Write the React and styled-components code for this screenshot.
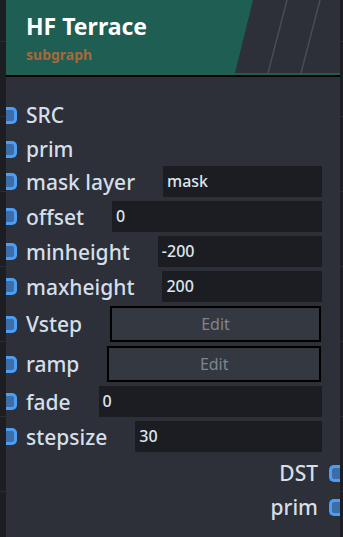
import React from "react";
import styled, { createGlobalStyle } from "styled-components";

const GlobalStyle = createGlobalStyle`
  html, body {
    margin: 0;
    padding: 0;
    height: 100%;
  }
  body {
    background-color: #1c1e24;
    background-image: linear-gradient(#2a2d34 1px, transparent 1px);
    background-size: 100% 75px;
    background-position: 0 41px;
    font-family: "Noto Sans", "Open Sans", sans-serif;
    overflow: hidden;
  }
`;

const inputs = [
  { label: "mask layer", value: "mask" },
  { label: "offset", value: "0" },
  { label: "minheight", value: "-200" },
  { label: "maxheight", value: "200" },
];

const tail = [
  { label: "fade", value: "0" },
  { label: "stepsize", value: "30" },
];

const App = () => {
  return (
    <>
      <GlobalStyle />
      <Node>
        <Header>
          <Title>HF Terrace</Title>
          <Subtitle>subgraph</Subtitle>
          <Deco viewBox="0 0 105 73" preserveAspectRatio="none">
            <polygon points="18,0 105,0 105,73 0,73" fill="#2d3038" />
            <line x1="52" y1="0" x2="33" y2="73" stroke="#494c53" strokeWidth="1.5" />
            <line x1="85" y1="0" x2="66" y2="73" stroke="#494c53" strokeWidth="1.5" />
          </Deco>
        </Header>
        <Body>
          <SocketRow>
            <Socket />
            <Label>SRC</Label>
          </SocketRow>
          <SocketRow>
            <Socket />
            <Label>prim</Label>
          </SocketRow>
          {inputs.map((item) => (
            <FieldRow key={item.label}>
              <Socket />
              <Label>{item.label}</Label>
              <Field>{item.value}</Field>
            </FieldRow>
          ))}
          <ButtonRow>
            <Socket />
            <Label>Vstep</Label>
            <EditButton>Edit</EditButton>
          </ButtonRow>
          <ButtonRow>
            <Socket />
            <Label>ramp</Label>
            <EditButton>Edit</EditButton>
          </ButtonRow>
          {tail.map((item) => (
            <FieldRow key={item.label}>
              <Socket />
              <Label>{item.label}</Label>
              <Field>{item.value}</Field>
            </FieldRow>
          ))}
          <OutRow>
            <Label>DST</Label>
            <Socket right />
          </OutRow>
          <OutRow>
            <Label>prim</Label>
            <Socket right />
          </OutRow>
        </Body>
      </Node>
    </>
  );
};

const Node = styled.div`
  margin-left: 6px;
  width: 334px;
  height: 537px;
  background: #2d3038;
  display: flex;
  flex-direction: column;
`;

const Header = styled.div`
  position: relative;
  height: 75px;
  background: #1f5e52;
  border-bottom: 2px solid #000;
  padding-left: 20px;
  box-sizing: content-box;
  display: flex;
  flex-direction: column;
`;

const Title = styled.div`
  margin-top: 11px;
  font-size: 23px;
  font-weight: 700;
  line-height: 30px;
  color: #ffffff;
  position: relative;
  z-index: 1;
`;

const Subtitle = styled.div`
  margin-top: 5px;
  font-size: 14px;
  font-weight: 700;
  line-height: 18px;
  color: #a8683c;
`;

const Deco = styled.svg`
  position: absolute;
  right: 0;
  top: 0;
  width: 105px;
  height: 73px;
`;

const Body = styled.div`
  padding-top: 21px;
  display: flex;
  flex-direction: column;
`;

const Row = styled.div`
  display: flex;
  align-items: center;
  padding-right: 18px;
`;

const SocketRow = styled(Row)`
  height: 34px;
`;

const FieldRow = styled(Row)`
  height: 31px;
  margin-bottom: 4px;
`;

const ButtonRow = styled(Row)`
  height: 36px;
  margin-bottom: 4px;
  padding-right: 19px;
`;

const OutRow = styled(Row)`
  height: 34px;
  justify-content: flex-end;
  padding-right: 0;
  &:first-of-type {
    margin-top: 2px;
  }
`;

const Socket = styled.div`
  width: 11px;
  height: 17px;
  box-sizing: border-box;
  flex-shrink: 0;
  background: #3c6da6;
  border: 3px solid #4c9ef5;
  ${(p) =>
    p.right
      ? `border-right: none; border-radius: 5px 0 0 5px; margin-left: 11px;`
      : `border-left: none; border-radius: 0 5px 5px 0; margin-right: 9px;`}
`;

const Label = styled.div`
  font-size: 21px;
  font-weight: 500;
  color: #d4dfea;
  white-space: nowrap;
  margin-right: 28px;
  ${OutRow} & {
    margin-right: 0;
  }
`;

const Field = styled.div`
  flex: 1;
  height: 31px;
  background: #1b1d22;
  color: #dde5ee;
  font-size: 16px;
  font-weight: 500;
  line-height: 31px;
  padding-left: 4px;
`;

const EditButton = styled.div`
  flex: 1;
  height: 36px;
  box-sizing: border-box;
  background: #343840;
  border: 2px solid #000;
  color: #80858d;
  font-size: 16px;
  display: flex;
  align-items: center;
  justify-content: center;
`;

export default App;
